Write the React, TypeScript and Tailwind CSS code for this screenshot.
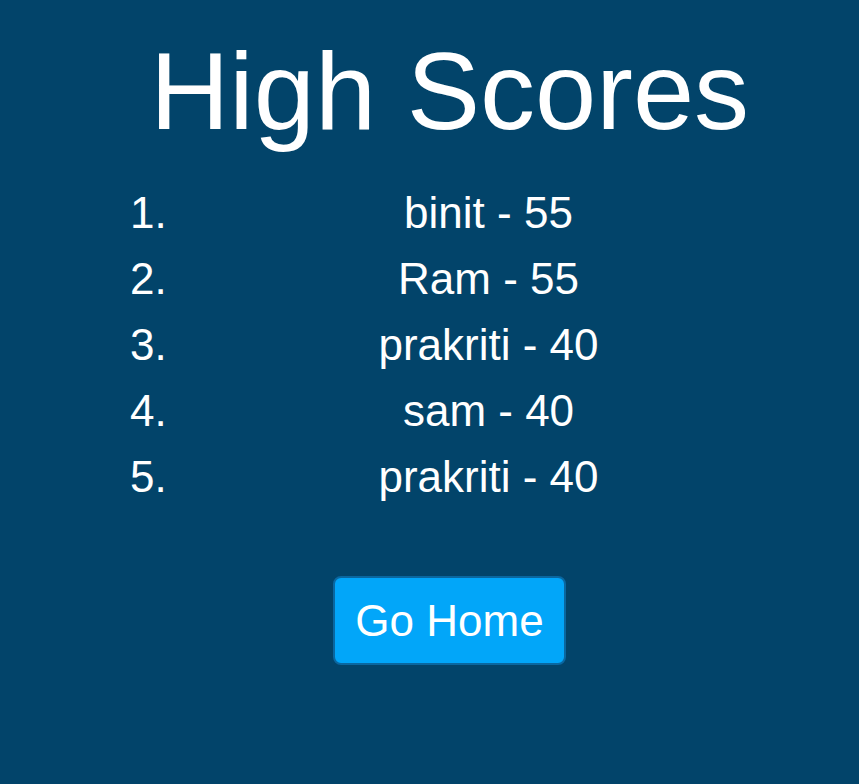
const scores = [
  { name: 'binit', score: 55 },
  { name: 'Ram', score: 55 },
  { name: 'prakriti', score: 40 },
  { name: 'sam', score: 40 },
  { name: 'prakriti', score: 40 },
];

function App() {
  return (
    <div className="min-h-screen bg-[#02446a] pl-10 pt-9 font-['Liberation_Sans',Arial,sans-serif] text-white">
      <h1 className="text-center text-[110px] leading-none font-normal">High Scores</h1>

      <ol className="mt-[34px] mr-[61px] ml-[139px] list-decimal text-[44px] leading-[66px]">
        {scores.map((s, i) => (
          <li key={i} className="text-center">
            {s.name} - {s.score}
          </li>
        ))}
      </ol>

      <div className="mt-[66px] flex justify-center">
        <button className="rounded-lg border-2 border-[#0a67a0] bg-[#02a6f9] px-5 py-4 text-[44px] leading-[53px] text-white">
          Go Home
        </button>
      </div>
    </div>
  );
}

export default App;
